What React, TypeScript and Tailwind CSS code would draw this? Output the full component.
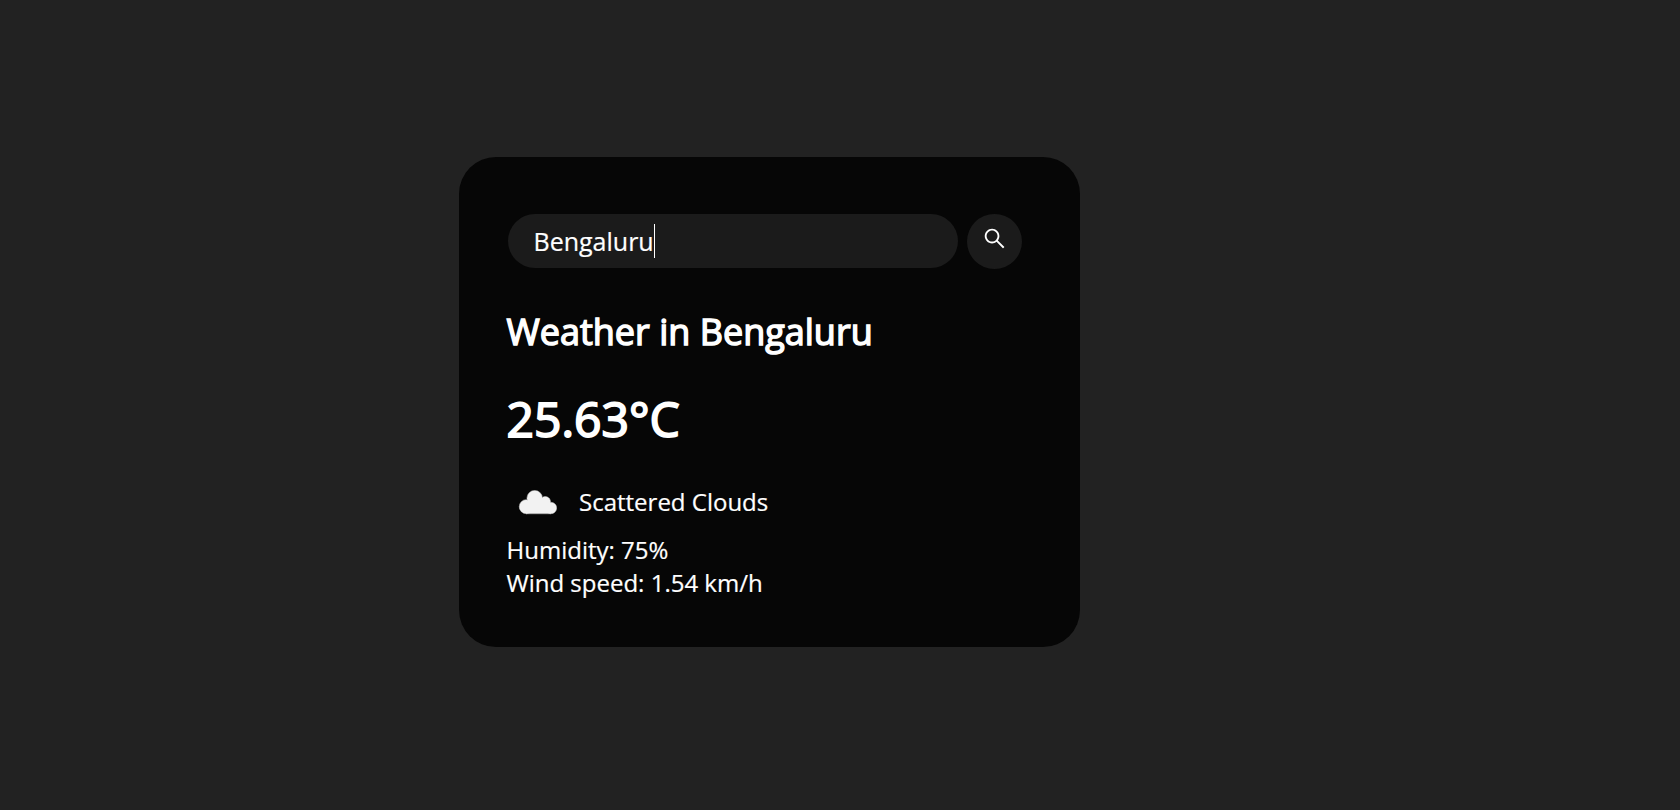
function SearchIcon() {
  return (
    <svg viewBox="0 0 1024 1024" className="size-[25px] fill-white">
      <path d="M909.6 854.500 649.900 594.800C690.200 542.700 712 479 712 412c0-80.200-31.300-155.400-87.900-212.100-56.600-56.700-132-87.900-212.100-87.900s-155.500 31.300-212.100 87.900C143.200 256.500 112 331.800 112 412c0 80.100 31.300 155.500 87.900 212.100C256.500 680.800 331.800 712 412 712c67 0 130.600-21.800 182.700-62l259.700 259.600a8.200 8.200 0 0 0 11.600 0l43.600-43.500a8.200 8.200 0 0 0 0-11.600zM570.400 570.400C528 612.700 471.800 636 412 636s-116-23.300-158.400-65.600C211.300 528 188 471.800 188 412s23.300-116.100 65.600-158.400C296 211.300 352.200 188 412 188s116.100 23.200 158.400 65.600S636 352.200 636 412s-23.300 116.100-65.600 158.400z" />
    </svg>
  );
}

function CloudIcon() {
  return (
    <svg viewBox="1 0 62 62" className="size-[62px] shrink-0">
      <g fill="#f2f2f2" stroke="#8a8a8a" strokeWidth="1">
        <circle cx="20.300" cy="35.700" r="7" />
        <circle cx="28.700" cy="27.200" r="7.700" />
        <circle cx="39.200" cy="30.900" r="5.300" />
        <circle cx="44.900" cy="37" r="5.700" />
        <path d="M20 42.700h25" />
      </g>
      <g fill="#f2f2f2">
        <circle cx="20.300" cy="35.700" r="6.800" />
        <circle cx="28.700" cy="27.200" r="7.500" />
        <circle cx="39.200" cy="30.900" r="5.100" />
        <circle cx="44.900" cy="37" r="5.500" />
        <path d="M20 30h20l5 3v9.600H20z" />
      </g>
    </svg>
  );
}

export default function App() {
  return (
    <main className="flex h-[810px] bg-[#222222] pt-[157px] pl-[459px] font-['Open_Sans',sans-serif] text-white">
      <section className="flex h-[490px] w-[621px] flex-col rounded-[37px] bg-[#060606] pt-[57px] pl-[47.500px]">
        <div className="flex gap-[9px] pl-[1.500px]">
          <div className="flex h-[54px] w-[450px] items-center rounded-full bg-[#1b1b1b] pl-[25.500px] text-[25px] [-webkit-text-stroke:0.200px_white]">
            <span className="pt-[2px]">Bengaluru</span>
            <span className="h-[34px] w-px bg-white" />
          </div>
          <button aria-label="Search" className="flex size-[55px] justify-center rounded-full bg-[#1b1b1b] pt-[12px]">
            <SearchIcon />
          </button>
        </div>
        <h2 className="mt-[38px] h-[50px] text-[36px] leading-[50px] [-webkit-text-stroke:1.400px_white]">
          Weather in Bengaluru
        </h2>
        <h1 className="mt-[28px] h-[68px] text-[48px] leading-[68px] [-webkit-text-stroke:1.800px_white]">
          25.63°C
        </h1>
        <div className="mt-[18px] flex h-[62px] items-center gap-[10.500px] text-[24px] [-webkit-text-stroke:0.200px_white]">
          <CloudIcon />
          <span>Scattered Clouds</span>
        </div>
        <p className="text-[24px] leading-[33px] [-webkit-text-stroke:0.200px_white]">Humidity: 75%</p>
        <p className="text-[24px] leading-[33px] [-webkit-text-stroke:0.200px_white]">Wind speed: 1.54 km/h</p>
      </section>
    </main>
  );
}
